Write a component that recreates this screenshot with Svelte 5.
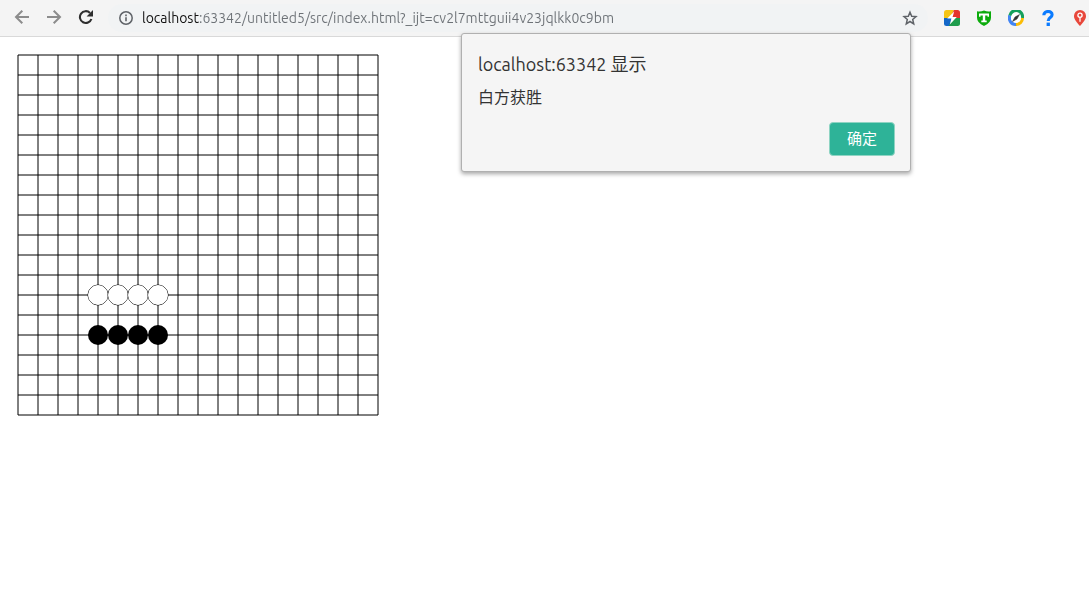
<script lang="ts">
  type Color = 'black' | 'white';

  interface Piece {
    col: number;
    row: number;
    color: Color;
  }

  const CELL = 20;
  const CELLS = 18;
  const MARGIN = 10;
  const SIZE = CELL * CELLS + MARGIN * 2;

  const at = (n: number) => MARGIN + n * CELL;
  const lines = Array.from({ length: CELLS + 1 }, (_, i) => at(i));

  const pieces: Piece[] = [
    { col: 4, row: 14, color: 'black' },
    { col: 4, row: 12, color: 'white' },
    { col: 5, row: 14, color: 'black' },
    { col: 5, row: 12, color: 'white' },
    { col: 6, row: 14, color: 'black' },
    { col: 6, row: 12, color: 'white' },
    { col: 7, row: 14, color: 'black' },
    { col: 7, row: 12, color: 'white' },
  ];

  let url = $state('localhost:63342/untitled5/src/index.html?_ijt=cv2l7mttguii4v23jqlkk0c9bm');
  let showAlert = $state(true);
</script>

<div class="browser">
  <header class="toolbar">
    <nav class="nav">
      <button class="icon-btn" aria-label="后退">
        <svg width="16" height="16" viewBox="0 0 16 16" fill="none" stroke="#8c8c8c" stroke-width="2">
          <path d="M15 7H2.5M8.300.7 2 7l6.300 6.300" />
        </svg>
      </button>
      <button class="icon-btn" aria-label="前进">
        <svg width="16" height="16" viewBox="0 0 16 16" fill="none" stroke="#8c8c8c" stroke-width="2">
          <path d="M1 7h12.500M7.700.7 14 7l-6.300 6.300" />
        </svg>
      </button>
      <button class="icon-btn" aria-label="重新加载">
        <svg width="16" height="16" viewBox="0 0 16 16">
          <path d="M13.4 9A5.900 5.900 0 1 1 12 2.900" fill="none" stroke="#2e2e2e" stroke-width="2.1" />
          <path d="M15 0v6.400H8.600z" fill="#2e2e2e" />
        </svg>
      </button>
    </nav>

    <div class="omnibox">
      <button class="icon-btn" aria-label="查看网站信息">
        <svg width="16" height="16" viewBox="0 0 16 16">
          <circle cx="8" cy="8" r="6.2" fill="none" stroke="#5f6368" stroke-width="1.5" />
          <path d="M7.2 7.2h1.6v4H7.2zM7.2 4.6h1.6v1.6H7.2z" fill="#5f6368" />
        </svg>
      </button>
      <input class="url" type="text" aria-label="地址和搜索栏" spellcheck="false" bind:value={url} />
      <button class="icon-btn" aria-label="为此网页添加书签">
        <svg width="16" height="16" viewBox="0 0 16 16">
          <path
            d="M8 2.2l1.7 4 4.3.4-3.3 2.9 1 4.3L8 11.5l-3.7 2.3 1-4.3L2 6.6l4.3-.4z"
            fill="none"
            stroke="#5f6368"
            stroke-width="1.5"
          />
        </svg>
      </button>
    </div>

    <div class="extensions">
      <button class="icon-btn" aria-label="闪电">
        <svg width="16" height="16" viewBox="0 0 16 16">
          <clipPath id="bolt-tile"><rect width="16" height="16" rx="2.5" /></clipPath>
          <g clip-path="url(#bolt-tile)">
            <path d="M0 0h10L6 9H0z" fill="#f5c518" />
            <path d="M10 0h6v8H6z" fill="#e5342c" />
            <path d="M0 8h9l-3 8H0z" fill="#1467c8" />
            <path d="M8 8h8v8H5z" fill="#1f9d4d" />
            <path d="M10.2 1.500 3.200 8.600h4.200L5.800 14.500l7-7.500H8.600z" fill="#fff" />
          </g>
        </svg>
      </button>
      <button class="icon-btn" aria-label="翻译">
        <svg width="16" height="16" viewBox="0 0 16 16">
          <path d="M1 1.2Q4.5 2.2 8 .4q3.500 1.800 7 .8v6.600Q15 13 8 16 1 13 1 7.800z" fill="#0cab0c" />
          <path d="M3 3.500h10v3.200h-1.500V5.500H9.200v5h1.500v1.700H5.300v-1.700h1.500v-5H4.500v1.200H3z" fill="#fff" />
        </svg>
      </button>
      <button class="icon-btn" aria-label="指南针">
        <svg width="16" height="16" viewBox="0 0 16 16">
          <g fill="none" stroke-width="3.200">
            <path d="M1.800 5.700A6.400 6.400 0 0 1 14.400 8" stroke="#14a05c" />
            <path d="M14.400 8A6.400 6.400 0 0 1 8 14.400" stroke="#fbbc05" />
            <path d="M8 14.400A6.400 6.400 0 0 1 1.800 5.700" stroke="#4285f4" />
          </g>
          <circle cx="8" cy="8" r="5" fill="#fff" />
          <path d="M11.500 4.500 9 9l-4.500 2.500L7 7z" fill="#333" stroke="#333" stroke-width=".5" />
        </svg>
      </button>
      <button class="icon-btn" aria-label="帮助">
        <svg width="16" height="16" viewBox="0 0 16 16">
          <path
            d="M3.800 5.200C3.800.2 12.200.4 12.100 4.800c0 2.900-3.900 2.700-3.900 6.200"
            fill="none"
            stroke="#0b7bff"
            stroke-width="3.100"
          />
          <path d="M6.600 12.600h3.300V16H6.600z" fill="#0b7bff" />
        </svg>
      </button>
      <button class="icon-btn" aria-label="位置">
        <svg width="16" height="16" viewBox="0 0 16 16">
          <path d="M8 0a6 6 0 0 1 6 6.2C14 9.5 10.500 13 8 16 5.500 13 2 9.500 2 6.200A6 6 0 0 1 8 0z" fill="#e8473b" />
          <circle cx="8" cy="5.3" r="2.1" fill="none" stroke="#fff" stroke-width="1.3" />
          <path d="M8 7.4v4.400" stroke="#fff" stroke-width="1.3" />
        </svg>
      </button>
    </div>
  </header>

  <main class="page">
    <svg class="board" width={SIZE} height={SIZE} role="img" aria-label="五子棋棋盘">
      {#each lines as pos}
        <path class="line" d="M{at(0)} {pos}H{at(CELLS)}M{pos} {at(0)}V{at(CELLS)}" />
      {/each}
      {#each pieces as piece}
        <circle class={piece.color} cx={at(piece.col)} cy={at(piece.row)} r="10" />
      {/each}
    </svg>
  </main>

  {#if showAlert}
    <div class="alert" role="alertdialog" aria-labelledby="alert-title" aria-describedby="alert-text">
      <h1 id="alert-title">localhost:63342 显示</h1>
      <p id="alert-text">白方获胜</p>
      <button class="ok" onclick={() => (showAlert = false)}>确定</button>
    </div>
  {/if}
</div>

<style>
  :global(body) {
    margin: 0;
    background: #fff;
  }

  .browser {
    position: relative;
    min-height: 100vh;
    font-family: Ubuntu, 'Open Sans', 'Noto Sans CJK SC', sans-serif;
  }

  .toolbar {
    display: flex;
    align-items: center;
    box-sizing: border-box;
    height: 37px;
    padding: 0 1px 0 14px;
    background: #f4f4f4;
    border-bottom: 1px solid #d9d9d9;
  }

  .nav,
  .extensions {
    display: flex;
    flex: none;
    gap: 16px;
  }

  .extensions {
    margin-left: 16px;
  }

  .icon-btn {
    display: block;
    flex: none;
    width: 16px;
    height: 16px;
    padding: 0;
    border: none;
    background: none;
    cursor: pointer;
  }

  .icon-btn svg {
    display: block;
  }

  .omnibox {
    display: flex;
    flex: 1;
    align-items: center;
    gap: 8px;
    min-width: 0;
    height: 28px;
    margin-left: 14px;
    padding: 0 10px;
    border-radius: 14px;
    background: #f1f3f4;
  }

  .url {
    flex: 1;
    min-width: 0;
    padding: 0;
    border: none;
    outline: none;
    font: inherit;
    font-size: 14px;
    line-height: 20px;
    color: #6c7176;
    /* host part is darker than the path */
    background: linear-gradient(to right, #111 58px, #6c7176 58px);
    -webkit-background-clip: text;
    background-clip: text;
    -webkit-text-fill-color: transparent;
  }

  .page {
    padding: 8px;
  }

  .board {
    display: block;
  }

  .line {
    fill: none;
    stroke: #000;
    stroke-width: 1;
  }

  .black {
    fill: #000;
  }

  .white {
    fill: #fff;
    stroke: #000;
    stroke-width: 1;
    paint-order: stroke;
  }

  .alert {
    position: absolute;
    top: 33px;
    right: 178px;
    display: flex;
    flex-direction: column;
    box-sizing: border-box;
    width: 450px;
    padding: 18px 15px 15px 16px;
    border: 1px solid #b0b0b0;
    border-radius: 3px;
    background: #f5f5f5;
    box-shadow: 0 2px 4px rgba(0, 0, 0, 0.35);
    color: #333;
  }

  h1 {
    margin: 0;
    font-size: 18px;
    font-weight: 400;
    line-height: 24px;
  }

  p {
    margin: 9px 0 13px;
    font-size: 16px;
    line-height: 24px;
  }

  .ok {
    align-self: flex-end;
    width: 66px;
    height: 34px;
    padding: 0 0 3px;
    border: 1px solid #8fd4c3;
    border-radius: 4px;
    background: #2eb398;
    color: #fff;
    font: inherit;
    font-size: 15px;
    cursor: pointer;
  }
</style>
